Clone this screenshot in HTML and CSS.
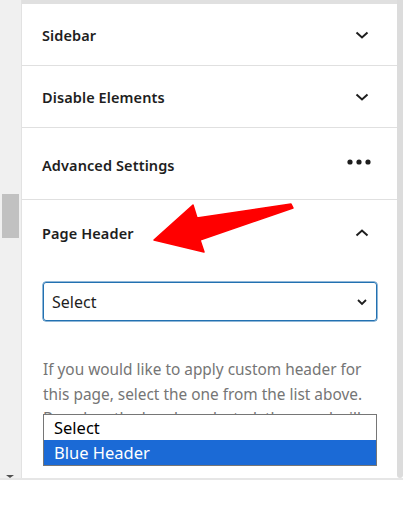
FILE: index.html
```html
<!DOCTYPE html>
<html>
<head>
<meta charset="utf-8">
<link rel="stylesheet" href="styles.css">
</head>
<body>
<div class="frame">
  <div class="leftbar">
    <div class="thumb"></div>
    <div class="arrow-down"></div>
  </div>
  <div class="panel">
    <div class="section">
      <div class="head">
        <span class="title">Sidebar</span>
        <svg class="icon" width="24" height="24" viewBox="0 0 24 24"><path d="M6.5 9.5 L12 14.5 L17.5 9.5" fill="none" stroke="#1e1e1e" stroke-width="2"/></svg>
      </div>
    </div>
    <div class="section">
      <div class="head">
        <span class="title">Disable Elements</span>
        <svg class="icon" width="24" height="24" viewBox="0 0 24 24"><path d="M6.5 9.5 L12 14.5 L17.5 9.5" fill="none" stroke="#1e1e1e" stroke-width="2"/></svg>
      </div>
    </div>
    <div class="section">
      <div class="head tall">
        <span class="title low">Advanced Settings</span>
        <svg class="icon dots" width="28" height="24" viewBox="0 0 28 24"><circle cx="5" cy="12" r="2.6" fill="#1e1e1e"/><circle cx="14" cy="12" r="2.6" fill="#1e1e1e"/><circle cx="23" cy="12" r="2.6" fill="#1e1e1e"/></svg>
      </div>
    </div>
    <div class="section open">
      <div class="head">
        <span class="title">Page Header</span>
        <svg class="icon" width="24" height="24" viewBox="0 0 24 24"><path d="M6.5 14.5 L12 9.5 L17.5 14.5" fill="none" stroke="#1e1e1e" stroke-width="2"/></svg>
      </div>
      <div class="body">
        <div class="select">
          <span>Select</span>
          <svg width="12" height="12" viewBox="0 0 12 12"><path d="M2 4 L6 8 L10 4" fill="none" stroke="#1e1e1e" stroke-width="1.8"/></svg>
        </div>
        <p class="help">If you would like to apply custom header for this page, select the one from the list above. Based on the header selected, the panel will display its settings.</p>
        <div class="listbox">
          <div class="opt">Select</div>
          <div class="opt sel">Blue Header</div>
        </div>
      </div>
    </div>
    <svg class="red-arrow" width="403" height="523" viewBox="0 0 403 523"><polygon points="154,240 193,205 197,218 291,204 293,208 200,240 204,252" fill="#ff0000" stroke="#ff0000" stroke-width="1.5" stroke-linejoin="round"/></svg>
  </div>
  <div class="rightbar"></div>
</div>
</body>
</html>
```
FILE: styles.css
```css
* { box-sizing: border-box; }
html, body { margin: 0; padding: 0; background: #fff; }
body { font-family: "Noto Sans", "Open Sans", sans-serif; color: #1e1e1e; }
.frame {
  display: flex;
  height: 480px;
  border-bottom: 2px solid #e6e6e6;
}
.leftbar {
  width: 22px;
  background: #f0f0f0;
  border-right: 1px solid #e2e2e2;
  position: relative;
}
.thumb {
  margin: 194px 0 0 2px;
  width: 17px;
  height: 44px;
  background: #c1c1c1;
}
.arrow-down {
  position: absolute;
  left: 6px;
  bottom: 0;
  width: 0; height: 0;
  border-left: 4px solid transparent;
  border-right: 4px solid transparent;
  border-top: 3px solid #505050;
}
.panel {
  flex: 1;
  border-top: 4px solid #e0e0e0;
  overflow: hidden;
}
.rightbar {
  width: 6px;
  background: #dcdcdc;
  border-radius: 0 0 3px 3px;
}
.section { border-bottom: 1px solid #e0e0e0; }
.section.open { border-bottom: none; }
.head {
  height: 61px;
  display: flex;
  align-items: center;
  justify-content: space-between;
  padding: 0 23px 0 20px;
}
.head.tall { height: 71px; }
.section.open .head { height: 65px; }
.title { font-size: 14.5px; font-weight: 600; letter-spacing: 0.1px; }
.title.low { margin-top: 3px; }
.icon { display: block; }
.dots { margin-right: 1px; margin-top: -3px; }
.body { padding: 17px 20px 0 21px; position: relative; }
.select {
  height: 39px;
  border: 1px solid #2271b1;
  border-radius: 3px;
  display: flex;
  align-items: center;
  justify-content: space-between;
  padding: 0 8px 0 8px;
  font-size: 16px;
  box-shadow: 0 0 0 0.5px #2271b1;
}
.select svg { display: block; }
.help {
  margin: 37px 0 0 0;
  font-size: 15.4px;
  line-height: 24.5px;
  color: #757575;
}
.listbox {
  position: absolute;
  left: 21px;
  top: 149px;
  width: 334px;
  border: 1px solid #767676;
  background: #fff;
  font-size: 16.5px;
}
.opt { height: 25px; line-height: 25px; padding-left: 10px; color: #000; }
.opt.sel { background: #1b6ad6; color: #fff; }
.red-arrow { position: absolute; left: 0; top: 0; pointer-events: none; }
```
